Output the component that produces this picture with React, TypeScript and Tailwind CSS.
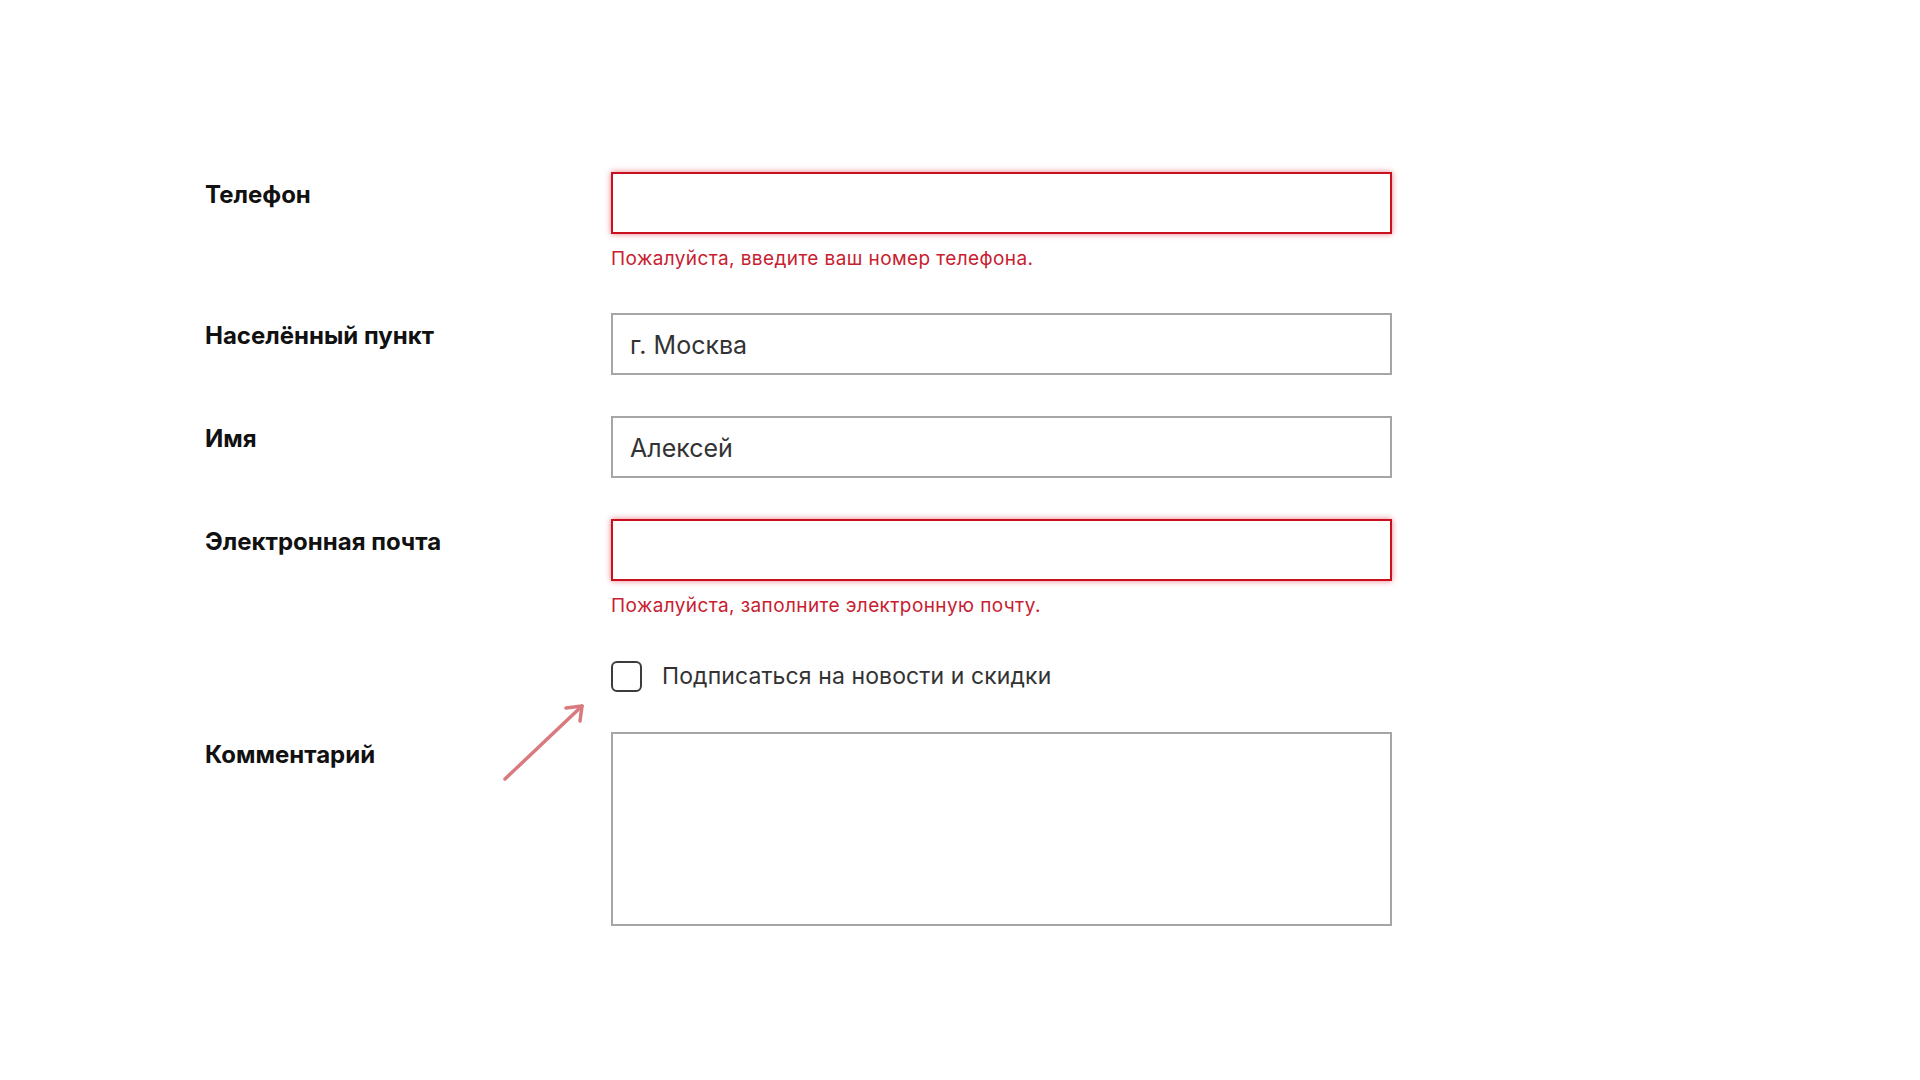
import React from 'react';

interface FieldRowProps {
  label: string;
  children: React.ReactNode;
  className?: string;
}

function FieldRow({ label, children, className = '' }: FieldRowProps) {
  return (
    <div className={`flex ${className}`}>
      <div className="w-[406px] shrink-0 pt-[9px] text-[24px] leading-[28px] font-bold text-[#111]">{label}</div>
      <div className="w-[781px] shrink-0">{children}</div>
    </div>
  );
}

function TextInput({ value = '', invalid = false }: { value?: string; invalid?: boolean }) {
  const border = invalid
    ? 'border-[#c8101f] shadow-[0_0_6px_rgba(210,20,40,0.55)]'
    : 'border-[#a6a6a6]';
  return (
    <input
      type="text"
      defaultValue={value}
      className={`block w-full h-[62px] border-2 ${border} bg-white px-[17px] pt-[2px] text-[25px] text-[#333] outline-none`}
    />
  );
}

function ErrorText({ children }: { children: React.ReactNode }) {
  return <p className="mt-[13px] text-[19px] tracking-[0.4px] leading-[24px] text-[#c8202f]">{children}</p>;
}

export default function App() {
  return (
    <div className="relative w-full h-[1080px] bg-white font-['Inter','Liberation_Sans',sans-serif]">
      <div className="pl-[205px] pt-[172px]">
        <FieldRow label="Телефон">
          <TextInput invalid />
          <ErrorText>Пожалуйста, введите ваш номер телефона.</ErrorText>
        </FieldRow>

        <FieldRow label="Населённый пункт" className="mt-[42px]">
          <TextInput value="г. Москва" />
        </FieldRow>

        <FieldRow label="Имя" className="mt-[41px]">
          <TextInput value="Алексей" />
        </FieldRow>

        <FieldRow label="Электронная почта" className="mt-[41px]">
          <TextInput invalid />
          <ErrorText>Пожалуйста, заполните электронную почту.</ErrorText>
        </FieldRow>

        <div className="flex mt-[43px]">
          <div className="w-[406px] shrink-0" />
          <label className="flex items-center gap-[20px] h-[31px] cursor-pointer">
            <span className="w-[31px] h-[31px] rounded-[6px] border-2 border-[#3c3c3c] bg-white" />
            <span className="text-[23px] tracking-[0.1px] text-[#333]">Подписаться на новости и скидки</span>
          </label>
        </div>

        <FieldRow label="Комментарий" className="relative mt-[40px]">
          <svg
            className="absolute left-[297px] top-[-29px]"
            width="84"
            height="80"
            viewBox="0 0 84 80"
            fill="none"
            stroke="#d97b7e"
            strokeWidth="3.5"
            strokeLinecap="round"
            strokeLinejoin="round"
          >
            <path d="M3 76 L80 3" />
            <path d="M64 5 L80 3 L78 18" />
          </svg>
          <textarea className="block w-full h-[194px] border-2 border-[#a6a6a6] bg-white resize-none outline-none" />
        </FieldRow>
      </div>
    </div>
  );
}
